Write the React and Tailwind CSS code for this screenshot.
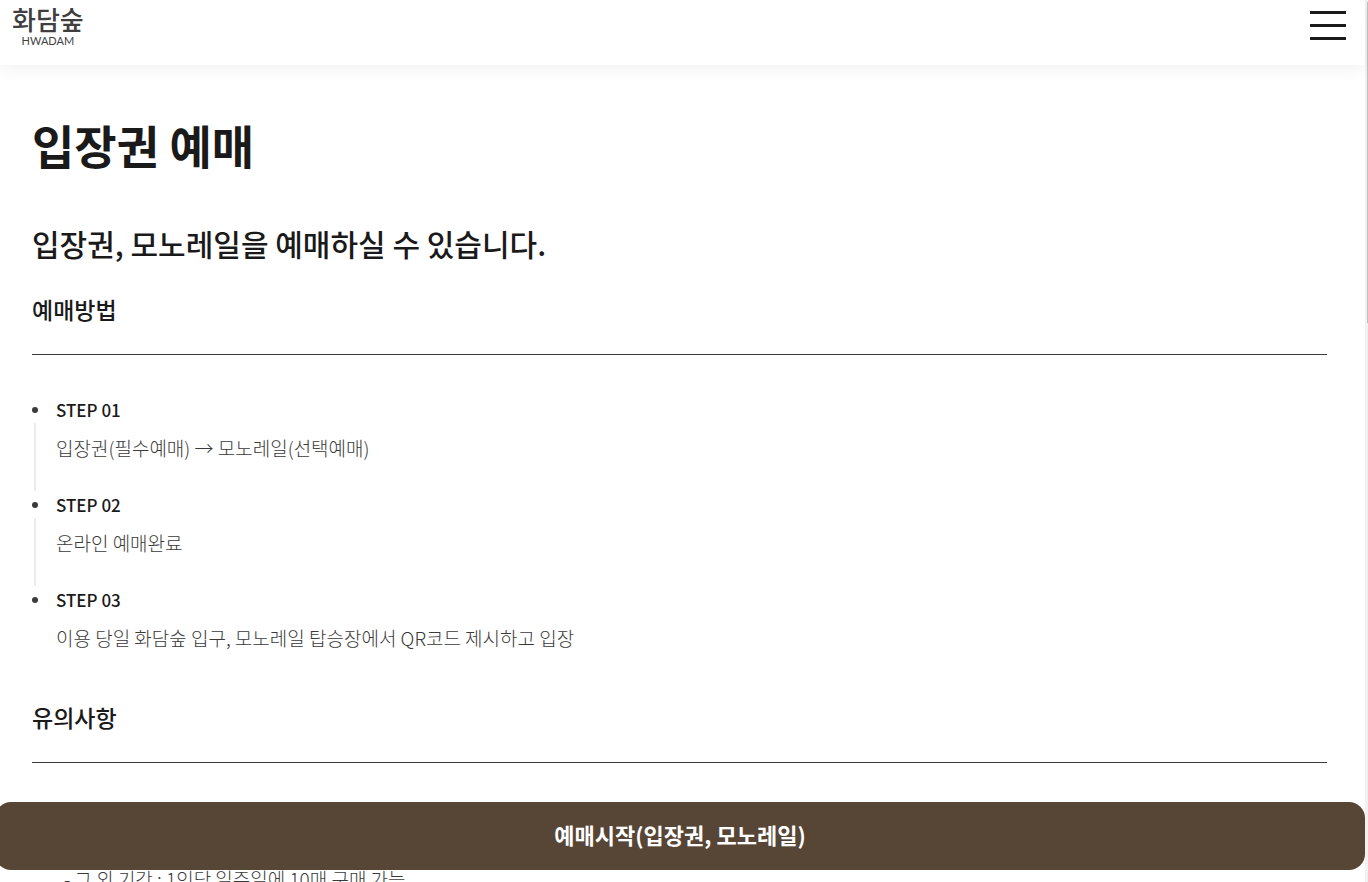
import React, { useState } from 'react';

const STEPS = [
  { title: 'STEP 01', text: '입장권(필수예매) → 모노레일(선택예매)' },
  { title: 'STEP 02', text: '온라인 예매완료' },
  { title: 'STEP 03', text: '이용 당일 화담숲 입구, 모노레일 탑승장에서 QR코드 제시하고 입장' },
];

const NOTICES = ['- 그 외 기간 : 1인당 일주일에 10매 구매 가능'];

function Header({ onMenu, menuOpen }) {
  return (
    <header className="relative z-10 flex h-[65px] shrink-0 items-start justify-between bg-white pr-[19px] pl-3 shadow-[0_4px_16px_rgba(0,0,0,0.06)]">
      <a href="#" className="flex flex-col items-center pt-1 text-[#3f3f3f]">
        <span className="text-[26px] leading-[30px] font-medium">화담숲</span>
        <span className="font-['Lato'] text-[11px] leading-[14px]">HWADAM</span>
      </a>
      <button
        type="button"
        aria-label="메뉴"
        aria-expanded={menuOpen}
        onClick={onMenu}
        className="mt-[11px] flex flex-col gap-[10px]"
      >
        <span className="h-[3px] w-9 bg-[#1a1a1a]" />
        <span className="h-[3px] w-9 bg-[#1a1a1a]" />
        <span className="h-[3px] w-9 bg-[#1a1a1a]" />
      </button>
    </header>
  );
}

function SectionTitle({ children }) {
  return (
    <h3 className="border-b border-[#3a3a3a] pb-[25px] text-[23px] leading-10 font-medium">{children}</h3>
  );
}

function Step({ title, text, last }) {
  return (
    <li className="flex h-[95px] gap-[18px]">
      {/* Dot and connecting line */}
      <div className="flex w-[6px] shrink-0 flex-col items-center pt-[11px]">
        <span className="h-[6px] w-[6px] rounded-full bg-[#3a3a3a]" />
        {!last && <span className="mt-[10px] h-[69px] w-[2px] bg-[#ebebeb]" />}
      </div>
      <div>
        <h4 className="text-[17px] leading-7 font-medium">{title}</h4>
        <p className="mt-[9px] text-[19px] leading-[30px] font-light text-[#3a3a3a]">{text}</p>
      </div>
    </li>
  );
}

function App() {
  const [menuOpen, setMenuOpen] = useState(false);

  return (
    <div className="flex h-screen overflow-hidden bg-white font-['Noto_Sans_CJK_KR',sans-serif] text-[#1a1a1a]">
      <div className="flex min-w-0 flex-1 flex-col">
        <Header menuOpen={menuOpen} onMenu={() => setMenuOpen(!menuOpen)} />

        <main className="min-h-0 flex-1 overflow-hidden pr-[38px] pl-8">
          <h1 className="mt-[45px] text-[46px] leading-[68px] font-bold">입장권 예매</h1>
          <h2 className="mt-[41px] text-[30px] leading-12 font-medium">입장권, 모노레일을 예매하실 수 있습니다.</h2>

          <section className="mt-[22px]">
            <SectionTitle>예매방법</SectionTitle>
            <ol className="mt-[41px]">
              {STEPS.map((step, index) => (
                <Step key={step.title} {...step} last={index === STEPS.length - 1} />
              ))}
            </ol>
          </section>

          <section className="mt-4">
            <SectionTitle>유의사항</SectionTitle>
            <ul className="mt-[101px] pl-8">
              {NOTICES.map((notice) => (
                <li key={notice} className="text-[19px] leading-[30px] font-light text-[#3a3a3a]">{notice}</li>
              ))}
            </ul>
          </section>
        </main>
      </div>

      {/* Scrollbar */}
      <div className="flex w-[3px] shrink-0 justify-end bg-[#f1f1f1] pt-[2px]">
        <div className="h-[321px] w-px bg-[#c1c1c1]" />
      </div>

      <button
        type="button"
        className="fixed right-[3px] bottom-3 -left-[5px] z-20 h-[68px] rounded-2xl bg-[#574536] pb-1 text-[22px] font-bold text-white"
      >
        예매시작(입장권, 모노레일)
      </button>
    </div>
  );
}

export default App;
